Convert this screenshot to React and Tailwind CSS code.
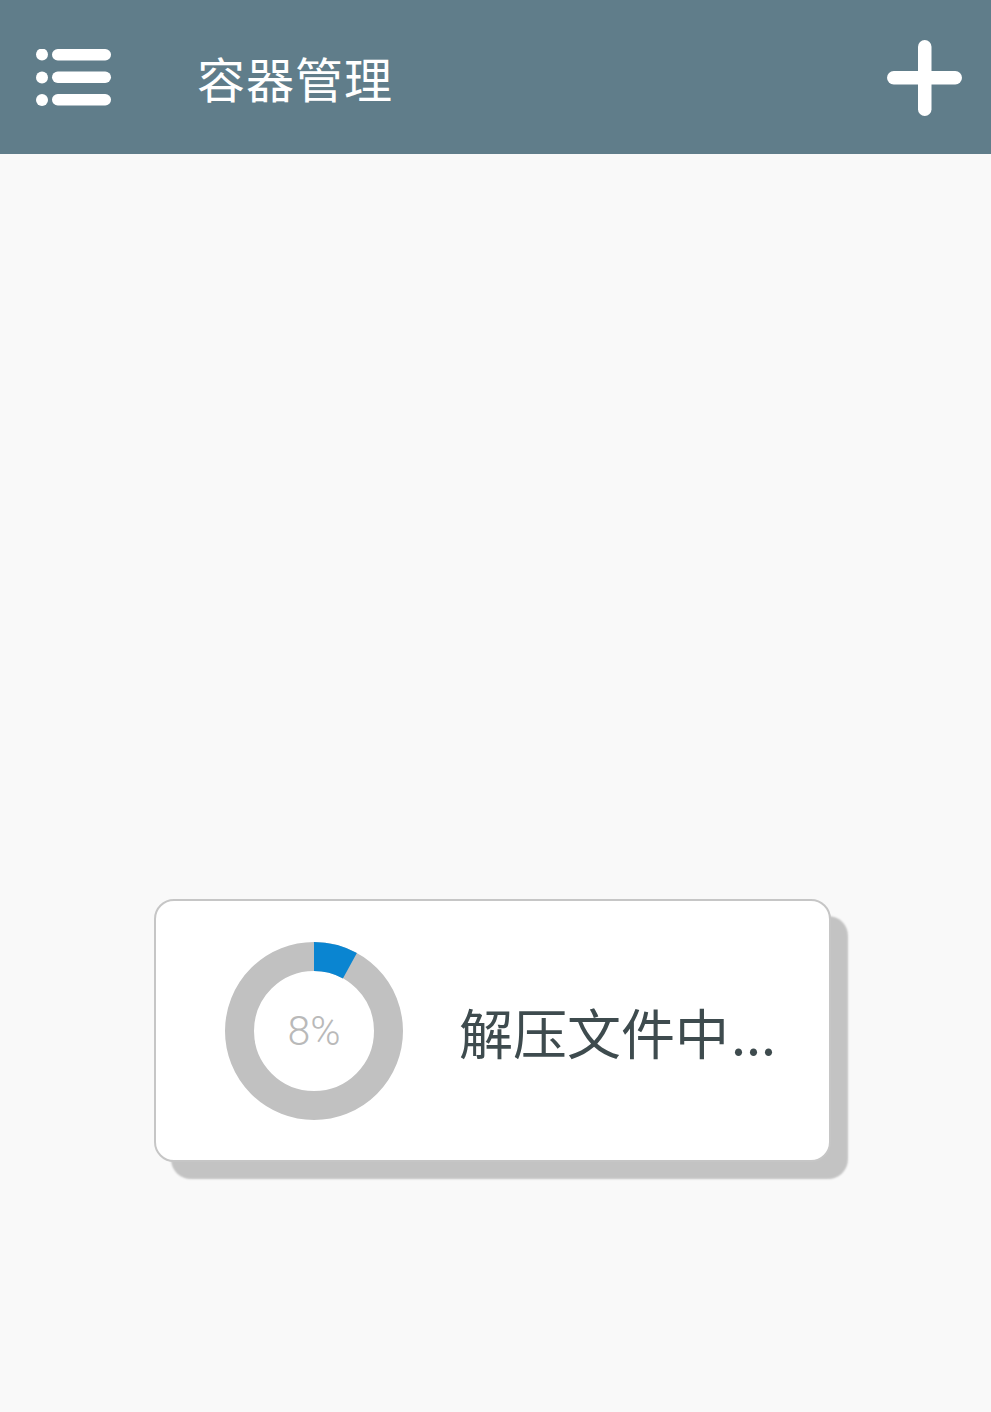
import React from "react";

function MenuIcon() {
  return (
    <svg width="76" height="58" viewBox="0 0 76 58" className="shrink-0">
      <circle cx="6" cy="5.5" r="6" fill="#fff" />
      <circle cx="6" cy="28.5" r="6" fill="#fff" />
      <circle cx="6" cy="51" r="6" fill="#fff" />
      <rect x="16" y="0" width="59" height="11.5" rx="5.75" fill="#fff" />
      <rect x="16" y="22.5" width="59" height="11.5" rx="5.75" fill="#fff" />
      <rect x="16" y="45" width="59" height="11.5" rx="5.75" fill="#fff" />
    </svg>
  );
}

function PlusIcon() {
  return (
    <svg width="75" height="76" viewBox="0 0 75 76" className="shrink-0">
      <rect x="31" y="0" width="13.5" height="76" rx="6.75" fill="#fff" />
      <rect x="0" y="31" width="75" height="13.5" rx="6.75" fill="#fff" />
    </svg>
  );
}

function Donut({ pct }) {
  const r = 74.5;
  const c = 2 * Math.PI * r;
  return (
    <div className="relative w-[178px] h-[178px] shrink-0">
      <svg width="178" height="178" viewBox="0 0 178 178">
        <circle cx="89" cy="89" r={r} fill="none" stroke="#c1c1c1" strokeWidth="29" />
        <circle
          cx="89"
          cy="89"
          r={r}
          fill="none"
          stroke="#0a85d1"
          strokeWidth="29"
          strokeDasharray={`${(c * pct) / 100} ${c}`}
          transform="rotate(-90 89 89)"
        />
      </svg>
      <div className="absolute inset-0 flex items-center justify-center text-[41px] font-light text-[#b9b9b9] font-['Roboto',sans-serif] pt-[3px]">
        {pct}%
      </div>
    </div>
  );
}

export default function App() {
  return (
    <div className="w-[991px] h-[1412px] bg-[#f9f9f9] flex flex-col font-['Noto_Sans_CJK_SC',sans-serif]">
      <header className="h-[154px] bg-[#607d8a] flex items-center shrink-0">
        <div className="ml-[36px] mt-[2px]">
          <MenuIcon />
        </div>
        <h1 className="ml-[85px] text-white text-[48px] leading-none font-normal tracking-[1px]">容器管理</h1>
        <div className="ml-auto mr-[29px] mt-[1px]">
          <PlusIcon />
        </div>
      </header>
      <main className="flex-1">
        <div className="mt-[745px] ml-[154px] w-[677px] h-[263px] bg-white border-[2.5px] border-[#c6c6c6] rounded-[20px] shadow-[17px_17px_2px_#c3c3c3] flex items-center pl-[69px]">
          <Donut pct={8} />
          <div className="ml-[56px] text-[54px] leading-none text-[#3e4b4e] mt-[2px]">
            解压文件中<span className="ml-[2px]">...</span>
          </div>
        </div>
      </main>
    </div>
  );
}
